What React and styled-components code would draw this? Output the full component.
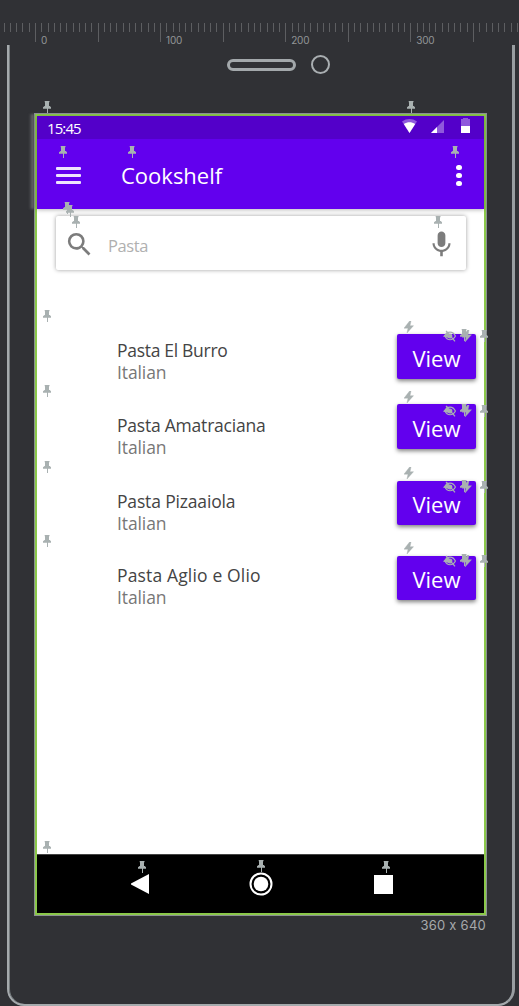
import React from "react";
import styled, { createGlobalStyle } from "styled-components";

const GlobalStyle = createGlobalStyle`
  * { box-sizing: border-box; }
  body {
    margin: 0;
    background: #303135;
    font-family: "Open Sans", "Noto Sans", sans-serif;
  }
  svg { display: block; }
`;

const Canvas = styled.div`
  position: relative;
  width: 519px;
  height: 1006px;
  overflow: hidden;
  background: #303135;
`;

const RulerBar = styled.header`
  height: 45px;
  padding-top: 23px;
`;

const Labels = styled.div`
  display: flex;
  padding-left: 41px;
  margin-top: -7px;
`;

const RulerLabel = styled.span`
  flex: 0 0 125.1px;
  font: 400 10px/10px "Inter", sans-serif;
  letter-spacing: -0.2px;
  color: #929597;
`;

const Device = styled.main`
  width: 508px;
  height: 961px;
  margin-left: 7px;
  padding: 10px 0 0 25px;
  border: 2.5px solid #a5aaad;
  border-width: 0 3px 2px 2px;
  border-right-color: #999ea1;
  border-radius: 0 0 17px 17px;
  box-shadow: inset 1px 0 #747a7d;
`;

const Sensors = styled.div`
  display: flex;
  align-items: center;
  gap: 15px;
  height: 19px;
  padding-left: 193px;
`;

const Speaker = styled.div`
  width: 69px;
  height: 12px;
  border: 3px solid #a3a8ab;
  border-radius: 6px;
`;

const Camera = styled.div`
  width: 19px;
  height: 19px;
  border: 2px solid #a9aeb1;
  border-radius: 50%;
`;

const Frame = styled.section`
  width: 453px;
  height: 803px;
  margin-top: 39px;
  border: 1px solid #8c9193;
`;

const Screen = styled.div`
  display: flex;
  flex-direction: column;
  height: 801px;
  border: 2px solid #8bc84a;
  background: #fff;
`;

const Top = styled.div`
  height: 93px;
  background: #6200ee;
  box-shadow: 0 1px 4px rgba(0, 0, 0, 0.28);
  position: relative;
`;

const StatusBar = styled.div`
  display: flex;
  align-items: center;
  height: 23px;
  padding: 2px 13px 0 10px;
  background: #5300c9;
  color: #fff;
`;

const Clock = styled.span`
  flex: 1;
  margin-top: -2px;
  font-size: 15px;
  line-height: 20px;
  letter-spacing: -0.9px;
`;

const StatusIcons = styled.div`
  display: flex;
  align-items: flex-end;
  height: 16px;
  margin-top: -5px;
`;

const AppBar = styled.div`
  display: flex;
  align-items: center;
  height: 70px;
  padding: 3px 22px 0 19px;
  color: #fff;
`;

const MenuLines = styled.div`
  display: flex;
  flex-direction: column;
  gap: 4px;
  width: 25px;
  span { height: 3px; background: #eee4fd; border-radius: 1px; }
`;

const Title = styled.h1`
  flex: 1;
  margin: -1px 0 0 40px;
  font-size: 22px;
  font-weight: 400;
  line-height: 30px;
  letter-spacing: 0;
`;

const Dots = styled.div`
  display: flex;
  flex-direction: column;
  gap: 2.4px;
  span { width: 5.6px; height: 5.6px; border-radius: 50%; background: #fff; }
`;

const Search = styled.div`
  display: flex;
  align-items: center;
  flex: none;
  width: 410px;
  height: 54px;
  margin: 7px 0 0 19px;
  padding: 2px 9px 0 8px;
  border-radius: 2px;
  background: #fff;
  box-shadow: 0 0 4px rgba(0, 0, 0, 0.38);
`;

const Placeholder = styled.span`
  flex: 1;
  margin-left: 13px;
  padding-top: 3px;
  font-size: 16.5px;
  font-weight: 400;
  line-height: 24px;
  letter-spacing: -0.4px;
  color: #b0b0b0;
`;

const List = styled.ul`
  flex: 1;
  margin: 0;
  padding: 40px 0 0 80px;
  list-style: none;
`;

const Row = styled.li`
  display: flex;
  justify-content: space-between;
  align-items: flex-start;
  height: ${(p) => p.$height}px;
  padding-right: 8px;
`;

const RowText = styled.div`
  padding-top: 29px;
  font-size: 17.5px;
  line-height: 22px;
`;

const Name = styled.div`
  color: #444;
  letter-spacing: ${(p) => p.$spacing || 0}px;
`;

const Cuisine = styled.div`
  color: #777;
  letter-spacing: -0.1px;
`;

const ViewButton = styled.button`
  width: 79px;
  height: ${(p) => p.$tall}px;
  margin-top: ${(p) => p.$offset}px;
  padding: 2px 0 0;
  border: 0;
  border-radius: 2px;
  background: #6200ee;
  box-shadow: 0 2px 4px rgba(0, 0, 0, 0.5);
  color: #fff;
  font: 400 22px/40px "Open Sans", sans-serif;
`;

const NavBar = styled.nav`
  display: flex;
  justify-content: space-between;
  align-items: center;
  height: 59px;
  padding: 0 91px 0 94px;
  border-top: 1px solid #444;
  background: #000;
`;

const Size = styled.div`
  width: 452px;
  text-align: right;
  font: 400 13px/18px "Inter", sans-serif;
  letter-spacing: 0.25px;
  color: #a6a9ab;
`;

const Marker = styled.span`
  position: absolute;
  left: ${(p) => p.$x}px;
  top: ${(p) => p.$y}px;
`;

const Glow = styled.div`
  position: absolute;
  left: 29px;
  top: 114px;
  width: 5px;
  height: 95px;
  background: linear-gradient(to right, rgba(140, 140, 140, 0), #77787a);
  filter: blur(1px);
`;

const GRAY = "#a9b1b1";

const Pin = ({ x, y }) => (
  <Marker $x={x} $y={y}>
    <svg width="8" height="12" viewBox="0 0 8 12" fill={GRAY}>
      <path d="M1.7 0h4.8v1.3H6V5h.8L8 6.2V7.8H0V6.2L1.6 5H2V1.3h-.3z" />
      <path d="M4 7h1v5H4z" />
    </svg>
  </Marker>
);

const Bolt = ({ x, y }) => (
  <Marker $x={x} $y={y}>
    <svg width="10" height="12" viewBox="0 0 10 12" fill={GRAY}>
      <path d="M5.6 0 0 7.2h4L3 12l6.5-7.3H6L7 0z" stroke={GRAY} strokeWidth=".4" />
    </svg>
  </Marker>
);

const EyeOff = ({ x, y }) => (
  <Marker $x={x} $y={y}>
    <svg width="13" height="12" viewBox="0 0 13 12" fill="none" stroke={GRAY} strokeWidth="1.2">
      <path d="M2 6C4 .8 10 .8 12.4 6 10 11 4 11 2 6z" />
      <circle cx="6.8" cy="6" r="2" fill={GRAY} />
      <path d="m3 .8 9 10.6" />
      <path d="M0 6.4 4.6 1.2l1 6.6z" fill={GRAY} stroke="none" />
    </svg>
  </Marker>
);

const ticks = Array.from({ length: 84 }, (_, i) => {
  const n = i - 5;
  return { x: Math.floor(35.5 + n * 6.257), major: n % 10 === 0 };
}).filter((t) => t.x < 519);

const Ruler = () => (
  <RulerBar>
    <svg width="519" height="19">
      {ticks.map((t) => (
        <rect key={t.x} x={t.x} y="0" width="1" height={t.major ? 19 : 9} fill="#5d5e61" />
      ))}
    </svg>
    <Labels>
      {[0, 100, 200, 300].map((n) => (
        <RulerLabel key={n}>{n}</RulerLabel>
      ))}
    </Labels>
  </RulerBar>
);

const recipes = [
  { name: "Pasta El Burro", height: 75, offset: 24, tall: 45, spacing: -0.3 },
  { name: "Pasta Amatraciana", height: 76, offset: 19, tall: 45, spacing: -0.22 },
  { name: "Pasta Pizaaiola", height: 74, offset: 20, tall: 44, spacing: -0.16 },
  { name: "Pasta Aglio e Olio", height: 75, offset: 21, tall: 44, spacing: 0.15 },
];

const pins = [
  [43, 101], [407, 101], [59, 146], [128, 146], [451, 146],
  [63, 202], [66, 205],
  [72, 216], [434, 216], [43, 310], [43, 385], [43, 461], [43, 535],
  [43, 841], [138, 861], [257, 860], [382, 861],
];

const buttonMarks = [
  { y: 330, bolt: 321 },
  { y: 405, bolt: 391 },
  { y: 481, bolt: 467 },
  { y: 555, bolt: 542 },
];

export default function App() {
  return (
    <Canvas>
      <GlobalStyle />
      <Ruler />
      <Device>
        <Sensors>
          <Speaker />
          <Camera />
        </Sensors>
        <Frame>
          <Screen>
            <Top>
              <StatusBar>
                <Clock>15:45</Clock>
                <StatusIcons>
                  <svg width="69" height="16" viewBox="0 0 69 16" fill="#fff">
                    <path d="M0 3.5C4.5.2 10.5.2 15 3.5L7.5 15z" opacity=".35" />
                    <path d="M1.8 6C5.5 3.8 9.5 3.8 13.2 6L7.5 15z" />
                    <path d="M42 2v13H29z" opacity=".35" />
                    <path d="M35 9v6h-6z" />
                    <path d="M59 1h2V0h5v1h2v14h-9z" opacity=".35" />
                    <path d="M59 8h9v7h-9z" />
                  </svg>
                </StatusIcons>
              </StatusBar>
              <AppBar>
                <MenuLines><span /><span /><span /></MenuLines>
                <Title>Cookshelf</Title>
                <Dots><span /><span /><span /></Dots>
              </AppBar>
            </Top>
            <Search>
              <svg width="31" height="31" viewBox="0 0 24 24" fill="#7c7c7c">
                <path d="M15.5 14h-.79l-.28-.27A6.47 6.47 0 0 0 16 9.5 6.5 6.5 0 1 0 9.5 16c1.61 0 3.09-.59 4.23-1.57l.27.28v.79l5 4.99L20.49 19l-4.99-5zm-6 0a4.5 4.5 0 1 1 0-9 4.5 4.5 0 0 1 0 9z" />
              </svg>
              <Placeholder>Pasta</Placeholder>
              <svg width="31" height="31" viewBox="0 0 24 24" fill="#7c7c7c">
                <path d="M12 14c1.66 0 2.99-1.34 2.99-3L15 5c0-1.66-1.34-3-3-3S9 3.34 9 5v6c0 1.66 1.34 3 3 3zm5.3-3c0 3-2.54 5.1-5.3 5.1S6.7 14 6.7 11H5c0 3.41 2.72 6.23 6 6.72V21h2v-3.28c3.28-.48 6-3.3 6-6.72h-1.7z" />
              </svg>
            </Search>
            <List>
              {recipes.map((r) => (
                <Row key={r.name} $height={r.height}>
                  <RowText>
                    <Name $spacing={r.spacing}>{r.name}</Name>
                    <Cuisine>Italian</Cuisine>
                  </RowText>
                  <ViewButton $offset={r.offset} $tall={r.tall}>View</ViewButton>
                </Row>
              ))}
            </List>
            <NavBar>
              <svg width="18" height="20" viewBox="0 0 18 20" fill="#fff">
                <path d="M18 0v20L0 10.5v-1z" />
              </svg>
              <svg width="26" height="24" viewBox="0 0 26 24" fill="none">
                <circle cx="12" cy="12" r="10.5" stroke="#fff" strokeWidth="2" />
                <circle cx="12" cy="12" r="7.3" fill="#fff" />
              </svg>
              <svg width="19" height="19" fill="#fff">
                <rect width="19" height="19" />
              </svg>
            </NavBar>
          </Screen>
        </Frame>
        <Size>360 x 640</Size>
      </Device>
      <Glow />
      {pins.map(([x, y]) => (
        <Pin key={`${x}-${y}`} x={x} y={y} />
      ))}
      {buttonMarks.map((m) => (
        <React.Fragment key={m.y}>
          <Bolt x={404} y={m.bolt} />
          <EyeOff x={443} y={m.y - 0.5} />
          <Pin x={460} y={m.y - 1} />
          <Bolt x={462} y={m.y} />
          <Pin x={480} y={m.y} />
        </React.Fragment>
      ))}
    </Canvas>
  );
}
